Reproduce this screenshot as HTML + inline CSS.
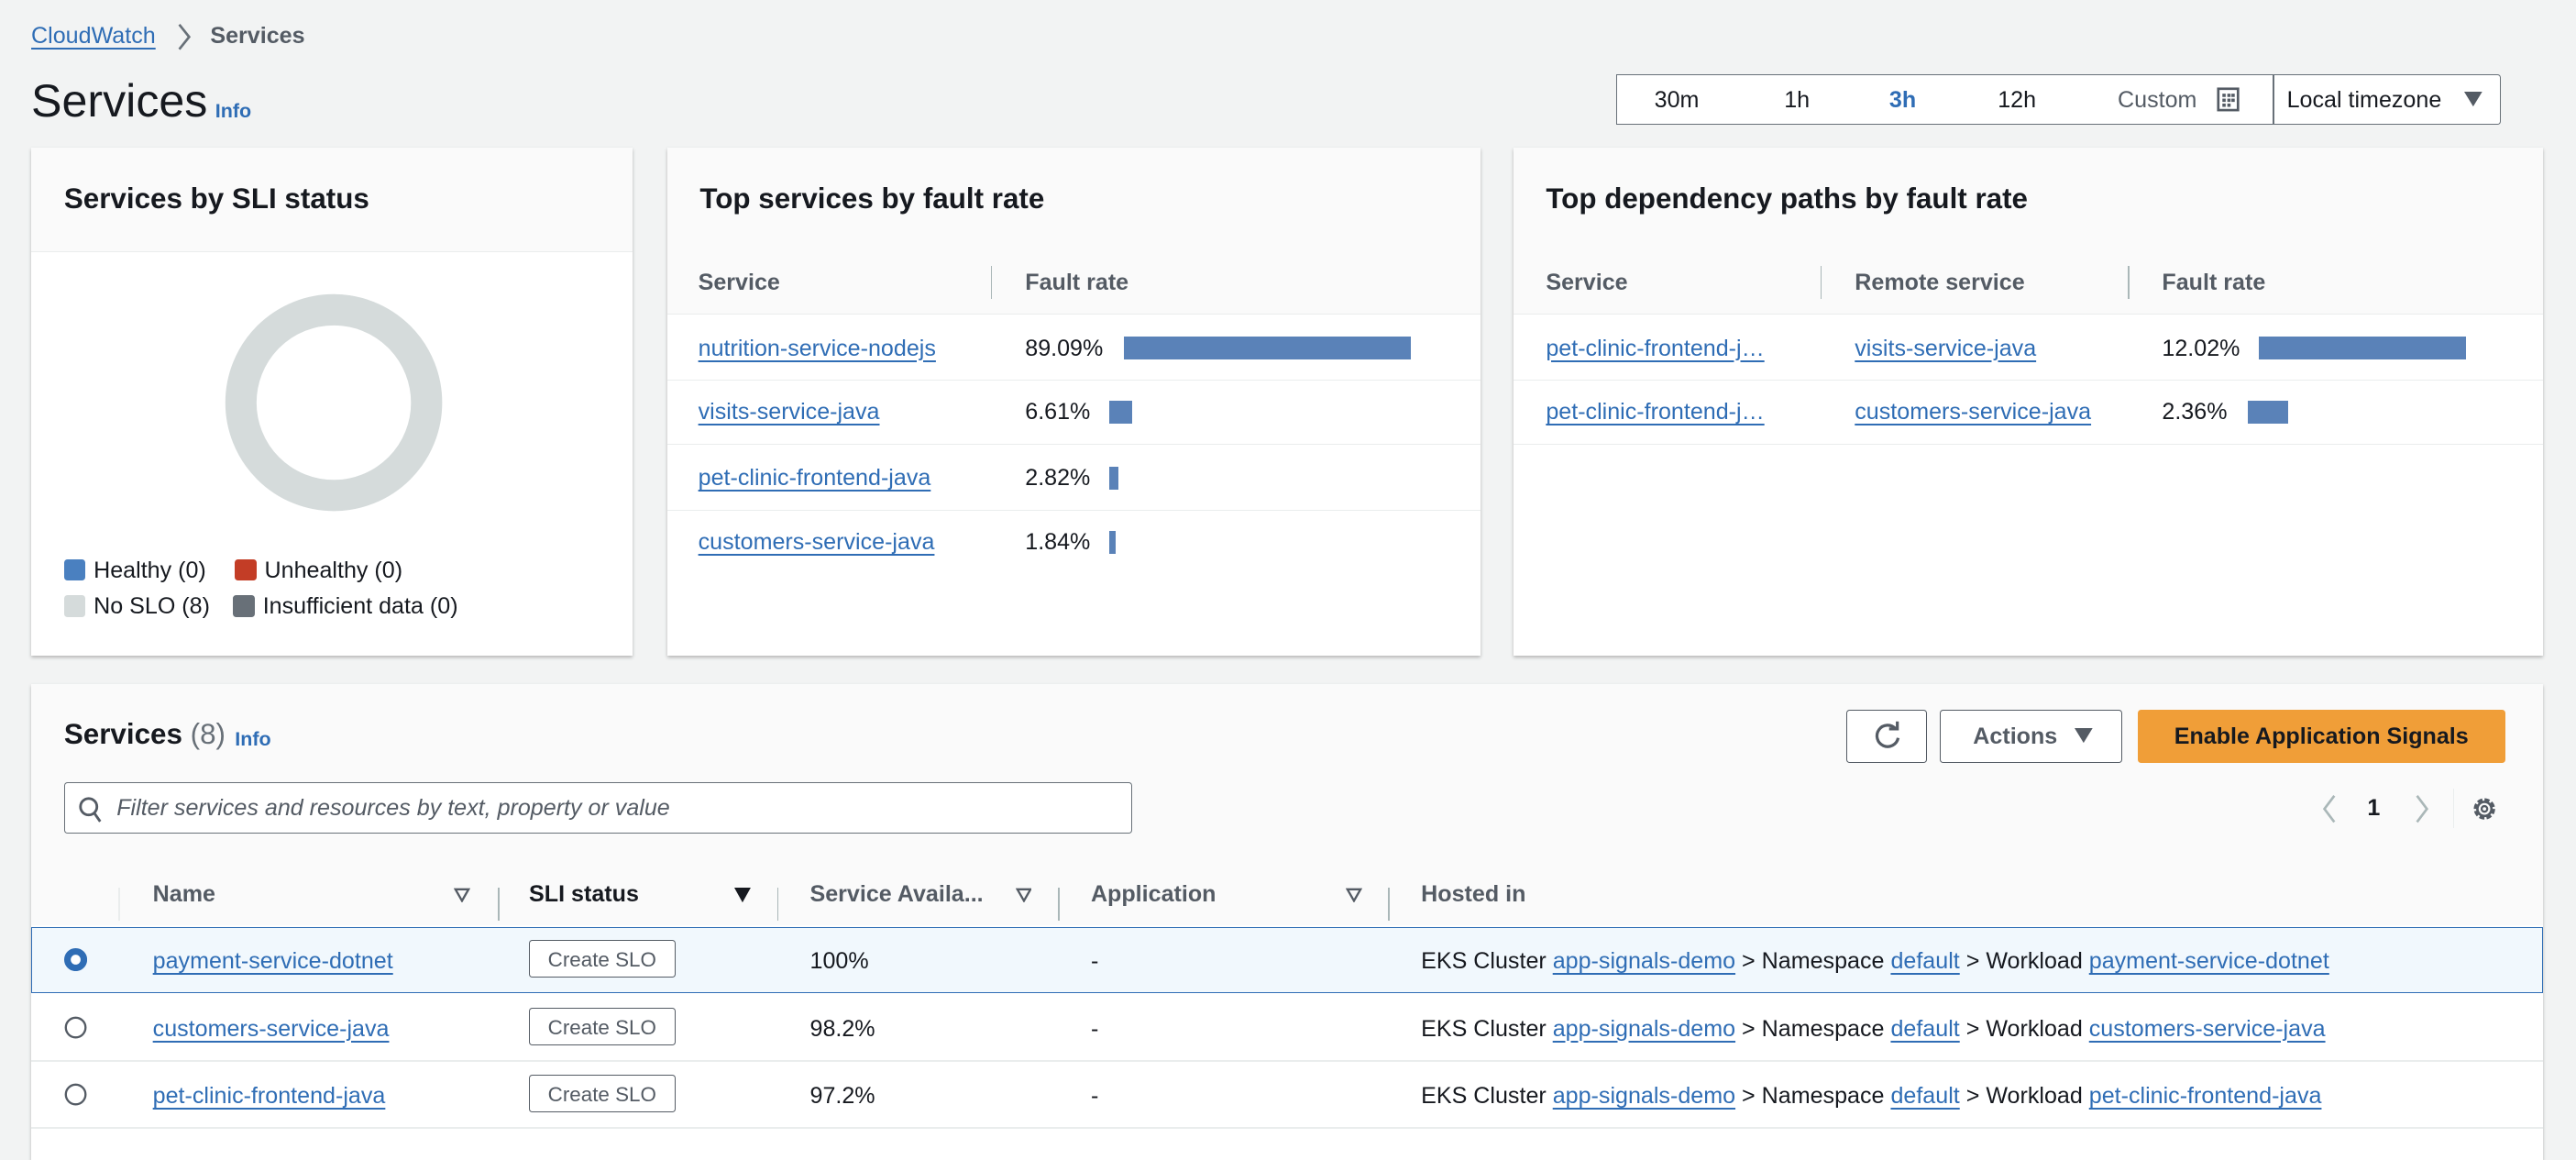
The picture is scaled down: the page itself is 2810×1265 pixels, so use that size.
<!DOCTYPE html>
<html><head><meta charset="utf-8"><style>
html,body{margin:0;padding:0;}
body{width:1568px;height:695px;zoom:1.7921;background:#f2f3f3;font-family:"Liberation Sans",sans-serif;font-size:14px;color:#16191f;position:relative;overflow:hidden;}
.a{position:absolute;white-space:nowrap;}
.lk{color:#2f6db5;text-decoration:underline;text-underline-offset:3px;text-decoration-thickness:1px;}
.panel{position:absolute;background:#fff;box-shadow:0 1px 2px rgba(0,0,0,.25);}
.ph{position:absolute;left:0;right:0;top:0;height:63px;background:#fafafa;border-bottom:1px solid #eaeded;}
.ph b{position:absolute;left:20px;top:21px;font-size:17.5px;}
.th{position:absolute;left:0;right:0;top:63px;height:38px;background:#fafafa;border-bottom:1px solid #eaeded;}
.th span{position:absolute;top:11px;font-weight:bold;color:#545b64;font-size:14px;}
.sep{position:absolute;top:9px;width:1px;height:20px;background:#aab7b8;}
.row{position:absolute;left:0;right:0;height:39px;border-bottom:1px solid #eaeded;}
.row span{position:absolute;top:12px;}
.bar{position:absolute;top:13px;height:14px;background:#5a82b8;}
.btn{position:absolute;border:1px solid #545b64;border-radius:2px;background:#fff;box-sizing:border-box;}
.sw{display:inline-block;width:13px;height:13px;border-radius:2px;vertical-align:-2px;margin-right:5px;}
</style></head><body>
<div class="a" style="left:19px;top:14px;font-size:14px;"><span class="lk">CloudWatch</span></div>
<svg class="a" style="left:107px;top:14px" width="10" height="17"><path d="M2 1 L8 8.5 L2 16" fill="none" stroke="#687078" stroke-width="1.5"/></svg>
<div class="a" style="left:128px;top:14px;font-size:14px;color:#545b64;font-weight:bold;">Services</div>
<div class="a" style="left:19px;top:45px;font-size:28px;">Services</div>
<div class="a" style="left:131px;top:61px;font-size:12px;font-weight:bold;color:#2f6db5;">Info</div>

<div class="a" style="left:984px;top:45px;width:400px;height:31px;background:#fff;border:1px solid #687078;box-sizing:border-box;"></div>
<div class="a" style="left:1384px;top:45px;width:138px;height:31px;background:#fff;border:1px solid #687078;border-radius:0 2px 2px 0;box-sizing:border-box;"></div>
<div class="a" style="left:1007px;top:53px;font-size:14px;">30m</div>
<div class="a" style="left:1086px;top:53px;font-size:14px;">1h</div>
<div class="a" style="left:1150px;top:53px;font-size:14px;color:#2f6db5;font-weight:bold;">3h</div>
<div class="a" style="left:1216px;top:53px;font-size:14px;">12h</div>
<div class="a" style="left:1289px;top:53px;font-size:14px;color:#545b64;">Custom</div>
<svg class="a" style="left:1349px;top:53px" width="14" height="15"><rect x="1" y="1" width="12" height="13" fill="none" stroke="#545b64" stroke-width="1.5"/><g fill="#545b64"><rect x="3.5" y="4" width="2" height="2"/><rect x="6.5" y="4" width="2" height="2"/><rect x="9" y="4" width="2" height="2"/><rect x="3.5" y="7" width="2" height="2"/><rect x="6.5" y="7" width="2" height="2"/><rect x="9" y="7" width="2" height="2"/><rect x="3.5" y="10" width="2" height="2"/><rect x="6.5" y="10" width="2" height="2"/></g></svg>
<div class="a" style="left:1392px;top:53px;font-size:14px;">Local timezone</div>
<svg class="a" style="left:1500px;top:56px" width="11" height="9"><path d="M0 0H11L5.5 9Z" fill="#545b64"/></svg>

<div class="panel" style="left:19px;top:90px;width:366px;height:309px;">
<div class="ph"><b>Services by SLI status</b></div>
<svg class="a" style="left:117px;top:88px" width="134" height="134"><circle cx="67" cy="67" r="56.5" fill="none" stroke="#d5dbdb" stroke-width="19"/></svg>
<div class="a" style="left:20px;top:249px;"><span class="sw" style="background:#4a80c0"></span>Healthy (0)</div>
<div class="a" style="left:124px;top:249px;"><span class="sw" style="background:#c33d26"></span>Unhealthy (0)</div>
<div class="a" style="left:20px;top:271px;"><span class="sw" style="background:#d5dbdb"></span>No SLO (8)</div>
<div class="a" style="left:123px;top:271px;"><span class="sw" style="background:#687078"></span>Insufficient data (0)</div>
</div>

<div class="panel" style="left:406px;top:90px;width:495px;height:309px;">
<div class="ph"><b>Top services by fault rate</b></div>
<div class="th"><span style="left:19px">Service</span><div class="sep" style="left:197px"></div><span style="left:218px">Fault rate</span></div>
<div class="row" style="top:102px"><span class="lk" style="left:19px">nutrition-service-nodejs</span><span style="left:218px">89.09%</span><div class="bar" style="left:278px;width:175px"></div></div>
<div class="row" style="top:141px"><span class="lk" style="left:19px">visits-service-java</span><span style="left:218px">6.61%</span><div class="bar" style="left:269px;width:14px"></div></div>
<div class="row" style="top:181px"><span class="lk" style="left:19px">pet-clinic-frontend-java</span><span style="left:218px">2.82%</span><div class="bar" style="left:269px;width:6px"></div></div>
<div class="row" style="top:220px;border:none"><span class="lk" style="left:19px">customers-service-java</span><span style="left:218px">1.84%</span><div class="bar" style="left:269px;width:4px"></div></div>
</div>

<div class="panel" style="left:921px;top:90px;width:627px;height:309px;">
<div class="ph"><b>Top dependency paths by fault rate</b></div>
<div class="th"><span style="left:20px">Service</span><div class="sep" style="left:187px"></div><span style="left:208px">Remote service</span><div class="sep" style="left:374px"></div><span style="left:395px">Fault rate</span></div>
<div class="row" style="top:102px"><span class="lk" style="left:20px">pet-clinic-frontend-j…</span><span class="lk" style="left:208px">visits-service-java</span><span style="left:395px">12.02%</span><div class="bar" style="left:454px;width:126px"></div></div>
<div class="row" style="top:141px"><span class="lk" style="left:20px">pet-clinic-frontend-j…</span><span class="lk" style="left:208px">customers-service-java</span><span style="left:395px">2.36%</span><div class="bar" style="left:447px;width:25px"></div></div>
</div>

<div class="panel" style="left:19px;top:416px;width:1529px;height:290px;">
<div class="a" style="left:0;right:0;top:0;height:108px;background:#fafafa;border-bottom:1px solid #eaeded;"></div>
<div class="a" style="left:20px;top:21px;font-size:17.5px;font-weight:bold;">Services <span style="font-weight:normal;color:#687078">(8)</span></div>
<div class="a" style="left:124px;top:27px;font-size:12px;font-weight:bold;color:#2f6db5;">Info</div>
<div class="btn" style="left:1105px;top:16px;width:49px;height:32px;"></div>
<svg class="a" style="left:1120px;top:22px" width="20" height="20"><path d="M15 5.5 A6.5 6.5 0 1 0 16.5 11" fill="none" stroke="#545b64" stroke-width="1.8"/><path d="M11 5.5H16V1" fill="none" stroke="#545b64" stroke-width="1.8"/></svg>
<div class="btn" style="left:1162px;top:16px;width:111px;height:32px;"></div>
<div class="a" style="left:1182px;top:24px;font-size:14px;font-weight:bold;color:#545b64;">Actions</div>
<svg class="a" style="left:1244px;top:27px" width="11" height="9"><path d="M0 0H11L5.5 9Z" fill="#545b64"/></svg>
<div class="a" style="left:1282px;top:16px;width:224px;height:32px;background:#f09e38;border-radius:2px;"></div>
<div class="a" style="left:1282px;top:24px;width:224px;text-align:center;font-size:14px;font-weight:bold;">Enable Application Signals</div>
<div class="a" style="left:20px;top:60px;width:650px;height:31px;background:#fff;border:1px solid #687078;border-radius:2px;box-sizing:border-box;"></div>
<svg class="a" style="left:29px;top:69px" width="14" height="16"><circle cx="6" cy="6" r="5" fill="none" stroke="#545b64" stroke-width="1.6"/><path d="M9.5 10L13 15" stroke="#545b64" stroke-width="1.6"/></svg>
<div class="a" style="left:52px;top:68px;font-size:14px;font-style:italic;color:#545b64;">Filter services and resources by text, property or value</div>
<svg class="a" style="left:1394px;top:67px" width="10" height="18"><path d="M8 1L2 9L8 17" fill="none" stroke="#aab7b8" stroke-width="1.5"/></svg>
<div class="a" style="left:1422px;top:68px;font-size:14px;font-weight:bold;">1</div>
<svg class="a" style="left:1450px;top:67px" width="10" height="18"><path d="M2 1L8 9L2 17" fill="none" stroke="#aab7b8" stroke-width="1.5"/></svg>
<div class="a" style="left:1474px;top:64px;width:1px;height:24px;background:#eaeded"></div>
<svg class="a" style="left:1484px;top:67px" width="18" height="18"><circle cx="9" cy="9" r="5.5" fill="none" stroke="#545b64" stroke-width="2" stroke-dasharray="3 1.3"/><circle cx="9" cy="9" r="4.3" fill="none" stroke="#545b64" stroke-width="1.5"/><circle cx="9" cy="9" r="1.7" fill="none" stroke="#545b64" stroke-width="1.3"/></svg>

<div class="a" style="left:0;right:0;top:108px;height:39px;background:#fafafa;"></div>
<div class="a" style="left:53px;top:124px;width:1px;height:20px;background:#eaeded"></div>
<div class="a" style="left:74px;top:120px;font-weight:bold;color:#545b64;">Name</div>
<svg class="a" style="left:257px;top:124px" width="10" height="9"><path d="M1 1H9L5 8Z" fill="none" stroke="#545b64" stroke-width="1.3"/></svg>
<div class="a" style="left:284px;top:124px;width:1px;height:20px;background:#aab7b8"></div>
<div class="a" style="left:303px;top:120px;font-weight:bold;">SLI status</div>
<svg class="a" style="left:428px;top:124px" width="10" height="9"><path d="M0 0H10L5 9Z" fill="#16191f"/></svg>
<div class="a" style="left:454px;top:124px;width:1px;height:20px;background:#aab7b8"></div>
<div class="a" style="left:474px;top:120px;font-weight:bold;color:#545b64;">Service Availa...</div>
<svg class="a" style="left:599px;top:124px" width="10" height="9"><path d="M1 1H9L5 8Z" fill="none" stroke="#545b64" stroke-width="1.3"/></svg>
<div class="a" style="left:625px;top:124px;width:1px;height:20px;background:#aab7b8"></div>
<div class="a" style="left:645px;top:120px;font-weight:bold;color:#545b64;">Application</div>
<svg class="a" style="left:800px;top:124px" width="10" height="9"><path d="M1 1H9L5 8Z" fill="none" stroke="#545b64" stroke-width="1.3"/></svg>
<div class="a" style="left:826px;top:124px;width:1px;height:20px;background:#aab7b8"></div>
<div class="a" style="left:846px;top:120px;font-weight:bold;color:#545b64;">Hosted in</div>

<div class="a" style="left:0;right:0;top:148px;height:39px;background:#f1f8fd;border:1px solid #2f6db5;"></div>
<div class="a" style="left:0;right:0;top:229px;height:1px;background:#eaeded"></div>
<div class="a" style="left:0;right:0;top:270px;height:1px;background:#eaeded"></div>

<svg class="a" style="left:20px;top:161px" width="14" height="14"><circle cx="7" cy="7" r="5" fill="#fff" stroke="#2f6db5" stroke-width="4"/></svg>
<svg class="a" style="left:20px;top:202px" width="14" height="14"><circle cx="7" cy="7" r="6" fill="#fff" stroke="#545b64" stroke-width="1.3"/></svg>
<svg class="a" style="left:20px;top:243px" width="14" height="14"><circle cx="7" cy="7" r="6" fill="#fff" stroke="#545b64" stroke-width="1.3"/></svg>

<div class="a lk" style="left:74px;top:161px">payment-service-dotnet</div>
<div class="a lk" style="left:74px;top:202px">customers-service-java</div>
<div class="a lk" style="left:74px;top:243px">pet-clinic-frontend-java</div>
<div class="btn" style="left:303px;top:156px;width:89px;height:23px;"></div><div class="a" style="left:303px;top:161px;width:89px;text-align:center;font-size:12.5px;color:#545b64">Create SLO</div>
<div class="btn" style="left:303px;top:197px;width:89px;height:23px;"></div><div class="a" style="left:303px;top:202px;width:89px;text-align:center;font-size:12.5px;color:#545b64">Create SLO</div>
<div class="btn" style="left:303px;top:238px;width:89px;height:23px;"></div><div class="a" style="left:303px;top:243px;width:89px;text-align:center;font-size:12.5px;color:#545b64">Create SLO</div>
<div class="a" style="left:474px;top:161px">100%</div>
<div class="a" style="left:474px;top:202px">98.2%</div>
<div class="a" style="left:474px;top:243px">97.2%</div>
<div class="a" style="left:645px;top:161px">-</div>
<div class="a" style="left:645px;top:202px">-</div>
<div class="a" style="left:645px;top:243px">-</div>
<div class="a" style="left:846px;top:161px">EKS Cluster <span class="lk">app-signals-demo</span> &gt; Namespace <span class="lk">default</span> &gt; Workload <span class="lk">payment-service-dotnet</span></div>
<div class="a" style="left:846px;top:202px">EKS Cluster <span class="lk">app-signals-demo</span> &gt; Namespace <span class="lk">default</span> &gt; Workload <span class="lk">customers-service-java</span></div>
<div class="a" style="left:846px;top:243px">EKS Cluster <span class="lk">app-signals-demo</span> &gt; Namespace <span class="lk">default</span> &gt; Workload <span class="lk">pet-clinic-frontend-java</span></div>
</div>
</body></html>
